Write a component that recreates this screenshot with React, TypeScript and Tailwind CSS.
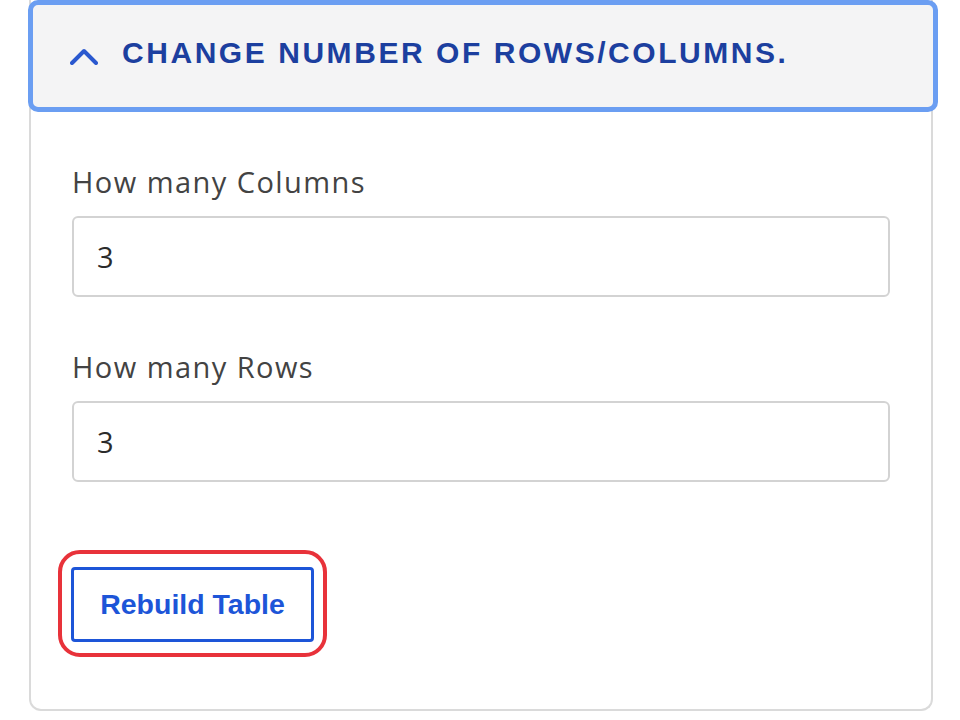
import React from "react";

// Accordion panel with table-size settings
function NumberField({ label, value }: { label: string; value: string }) {
  return (
    <div className="flex flex-col">
      <label className="text-[29px] leading-[36px] tracking-[0.05em] text-[#434343] mb-[16px]">{label}</label>
      <input
        type="text"
        defaultValue={value}
        className="h-[81px] w-full rounded-[6px] border-2 border-[#d3d3d3] bg-white px-[23px] text-[29px] text-[#2b2b2b] outline-none"
      />
    </div>
  );
}

export default function App() {
  return (
    <div className="min-h-[720px] w-[960px] bg-white" style={{ fontFamily: '"Open Sans", "Liberation Sans", sans-serif' }}>
      <div className="ml-[29px] h-[711px] w-[904px] rounded-b-[12px] border-2 border-t-0 border-[#dadada]">
        {/* accordion header */}
        <button className="-mx-[3px] flex h-[112px] w-[910px] items-center rounded-[10px] border-[5px] border-[#6b9ef2] bg-[#f4f4f5] pb-[8px] pl-[37px]">
          <svg width="28" height="18" viewBox="0 0 28 18" className="mr-[24px] mt-[8px]">
            <polyline points="2,16 14,4 26,16" fill="none" stroke="#2a58cf" strokeWidth="4" strokeLinecap="round" strokeLinejoin="round" />
          </svg>
          <span
            className="text-[30px] font-bold tracking-[0.085em] text-[#1c3f9f]"
            style={{ fontFamily: '"Liberation Sans", Arial, sans-serif' }}
          >
            CHANGE NUMBER OF ROWS/COLUMNS.
          </span>
        </button>

        {/* panel body */}
        <div className="flex flex-col px-[41px] pt-[52px]">
          <NumberField label="How many Columns" value="3" />
          <div className="mt-[52px]">
            <NumberField label="How many Rows" value="3" />
          </div>
          <div className="mt-[68px] -ml-[14px] self-start rounded-[22px] border-4 border-[#e8323a] px-[9px] pt-[13px] pb-[11px]">
            <button
              className="flex h-[75px] w-[243px] items-center justify-center rounded-[4px] border-[3px] border-[#1d55d8] bg-white text-[28.5px] font-bold text-[#1d55d8]"
              style={{ fontFamily: '"Liberation Sans", Arial, sans-serif' }}
            >
              Rebuild Table
            </button>
          </div>
        </div>
      </div>
    </div>
  );
}
